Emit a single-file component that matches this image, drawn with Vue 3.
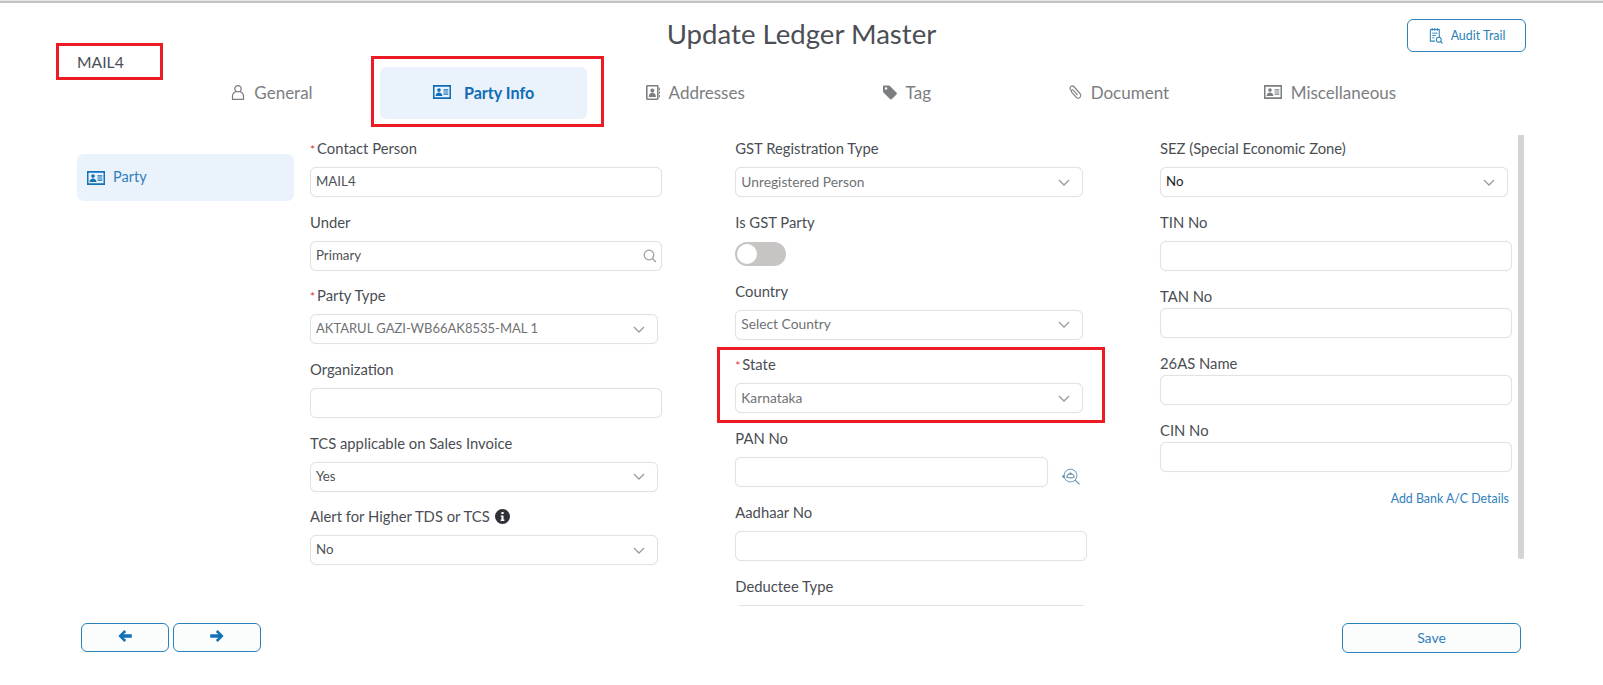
<template>
  <div class="page">
    <header class="top">
      <span></span>
      <h1 class="title">Update Ledger Master</h1>
      <div class="top-right">
        <button class="audit-btn">
          <svg class="audit-icon" viewBox="0 0 16 18">
            <path d="M2.5 2.5h9.5v8M2.5 2.5v12.5h5" fill="none" stroke="#2a82b8" stroke-width="1.1" />
            <path d="M4.5 1v3M7.2 1v3M10 1v3M4.5 6.5h5.5M4.5 9h4M4.5 11.500h2.500" fill="none" stroke="#2a82b8" stroke-width="1" />
            <circle cx="11.500" cy="13.500" r="2.600" fill="none" stroke="#2a82b8" stroke-width="1.100" />
            <path d="M13.400 15.400L15.500 17.500" stroke="#2a82b8" stroke-width="1.200" />
          </svg>
          Audit Trail
        </button>
      </div>
    </header>

    <nav class="tabs">
      <div
        v-for="tab in tabs"
        :key="tab.name"
        class="tab"
        :class="{ active: tab.active }"
      >
        <svg class="tab-icon" :class="tab.icon" :viewBox="icons[tab.icon].box">
          <path :d="icons[tab.icon].d" fill="currentColor" fill-rule="evenodd" />
        </svg>
        <span>{{ tab.name }}</span>
      </div>
    </nav>

    <main class="body">
      <aside class="side">
        <div class="side-item">
          <svg class="side-icon" :viewBox="icons.card.box">
            <path :d="icons.card.d" fill="currentColor" fill-rule="evenodd" />
          </svg>
          <span>Party</span>
        </div>
      </aside>

      <section class="form">
        <div
          v-for="(col, i) in columns"
          :key="i"
          class="col"
          :class="'col-' + i"
        >
          <div
            v-for="f in col"
            :key="f.label"
            class="field"
            :class="{ tight: f.tight, 'toggle-field': f.kind === 'toggle' }"
          >
            <label class="lbl">
              <i v-if="f.required" class="req">*</i>{{ f.label }}
              <svg v-if="f.info" class="info" viewBox="0 0 16 16">
                <path
                  d="M8 0a8 8 0 1 1 0 16A8 8 0 0 1 8 0zM6.800 3.200v2.200h2.400V3.200zM6 6.800v1.500h.9v3H6v1.500h4v-1.500H9.100V6.800z"
                  fill="#2f3136"
                  fill-rule="evenodd"
                />
              </svg>
            </label>

            <div v-if="f.kind === 'toggle'" class="toggle"><span class="knob"></span></div>

            <div v-else-if="f.kind === 'pan'" class="pan-row">
              <div class="ctl"></div>
              <svg class="pan-icon" viewBox="0 0 20 18">
                <circle cx="10" cy="8" r="6.800" fill="none" stroke="#5f93b3" stroke-width="1" />
                <path d="M14.900 12.800L19.500 17.400" stroke="#5f93b3" stroke-width="1.300" />
                <path d="M6 9.500c1.200-4.500 7-4.500 8 0-2 1.300-6 1.300-8 0z" fill="none" stroke="#6d8ea3" stroke-width="1.100" />
                <circle cx="10" cy="6" r="1.300" fill="#6d8ea3" />
                <path d="M0.500 9L3.500 6.800v4.400z" fill="#5f93b3" />
              </svg>
            </div>

            <div
              v-else
              class="ctl"
              :class="[f.kind, f.tone]"
            >
              <span>{{ f.value }}</span>
              <svg v-if="f.kind === 'select'" class="chev" viewBox="0 0 12 7">
                <path d="M1 1l5 5 5-5" fill="none" stroke="#9a9a9a" stroke-width="1.300" />
              </svg>
              <svg v-if="f.kind === 'search'" class="glass" viewBox="0 0 14 14">
                <circle cx="6" cy="6" r="4.800" fill="none" stroke="#9c9c9c" stroke-width="1.200" />
                <path d="M9.500 9.500L13 13" stroke="#9c9c9c" stroke-width="1.300" />
              </svg>
            </div>
          </div>

          <a v-if="i === 2" class="bank">Add Bank A/C Details</a>
        </div>
      </section>

      <div class="scroll"></div>
    </main>

    <footer class="foot">
      <div class="nav-btns">
        <button class="btn nav">
          <svg viewBox="0 0 14 12" class="arrow"><path d="M6.300 0L8.200 1.900 5.600 4.300H13.800v3.400H5.600L8.200 10.100 6.300 12 .4 6z" fill="#1172b8" /></svg>
        </button>
        <button class="btn nav">
          <svg viewBox="0 0 14 12" class="arrow"><path d="M7.700 0L5.800 1.900l2.600 2.400H.2v3.400h8.200l-2.600 2.400L7.700 12l5.900-6z" fill="#1172b8" /></svg>
        </button>
      </div>
      <button class="btn save">Save</button>
    </footer>

    <!-- red annotation boxes drawn over the screen -->
    <div class="mark mark-name">MAIL4</div>
    <div class="mark mark-tab"></div>
    <div class="mark mark-state"></div>
  </div>
</template>

<script setup>
const card =
  'M0 0h18v14H0zM1.500 1.700v10.600h15V1.700zM6 3.300a1.800 1.800 0 1 1 0 3.600 1.800 1.800 0 0 1 0-3.600zM2.600 11c0-4.700 6.800-4.700 6.800 0zM10.500 4.200h4.800v1.200h-4.800zM10.500 6.400h4.800v1.200h-4.800zM10.500 8.600h4.800v1.200h-4.800z'

const icons = {
  user: {
    box: '0 0 14 16',
    d: 'M7 0a4 4 0 0 1 3 6.700c2.200 1 3.500 2.800 3.500 5V16H.5v-4.300c0-2.200 1.300-4 3.500-5A4 4 0 0 1 7 0zM7 1.300a2.700 2.700 0 1 0 0 5.400 2.700 2.700 0 0 0 0-5.400zM5.300 7.500c-2 .7-3.500 2.200-3.500 4.200v3h10.400v-3c0-2-1.500-3.500-3.500-4.200-1 .6-2.400.6-3.400 0z'
  },
  card: { box: '0 0 18 14', d: card },
  book: {
    box: '0 0 15 16',
    d: 'M1.500 0h10.500A1.500 1.500 0 0 1 13.500 1.500v13a1.500 1.500 0 0 1-1.500 1.500H1.500A1.500 1.500 0 0 1 0 14.500v-13A1.500 1.500 0 0 1 1.500 0zM1.700 1.700v12.600h10.100V1.700zM6.800 3.600a2.200 2.200 0 1 1 0 4.400 2.200 2.200 0 0 1 0-4.400zM2.900 12.800c0-6 7.800-6 7.800 0zM14 3h1v2.500h-1zM14 6.800h1v2.500h-1zM14 10.600h1v2.500h-1z'
  },
  tag: {
    box: '0 0 15 15',
    d: 'M0 1.200C0 .5.500 0 1.200 0h5c.5 0 .9.200 1.200.5l7 7c.6.600.6 1.500 0 2.100l-4.800 4.900c-.6.600-1.500.6-2.100 0l-7-7C.2 7.100 0 6.700 0 6.200zM3.300 2a1.300 1.300 0 1 0 0 2.600 1.300 1.300 0 0 0 0-2.600z'
  },
  clip: {
    box: '0 0 14 16',
    d: 'M2 1.300c1.300-1.300 3.200-1.200 4.400 0l6.300 7.300c1.400 1.600 1.300 3.600 0 5-1.400 1.400-3.500 1.300-4.800-.1L3 8c-.8-.9-.7-2.100 0-2.800.8-.8 2-.7 2.800.2l4.300 5-.9.800-4.300-5c-.4-.4-.8-.4-1.100-.1-.3.300-.3.800.1 1.200l4.900 5.400c.9 1 2.300 1 3.100.2.900-.9.900-2.200 0-3.300L5.500 2.300C4.700 1.400 3.600 1.400 2.900 2.100 2.100 2.900 2.100 4 2.900 5L2 5.800C.800 4.400.800 2.500 2 1.300z'
  }
}

const tabs = [
  { name: 'General', icon: 'user' },
  { name: 'Party Info', icon: 'card', active: true },
  { name: 'Addresses', icon: 'book' },
  { name: 'Tag', icon: 'tag' },
  { name: 'Document', icon: 'clip' },
  { name: 'Miscellaneous', icon: 'card' }
]

const columns = [
  [
    { label: 'Contact Person', required: true, kind: 'input', value: 'MAIL4', tone: 'dark' },
    { label: 'Under', kind: 'search', value: 'Primary', tone: 'dark' },
    { label: 'Party Type', required: true, kind: 'select', value: 'AKTARUL GAZI-WB66AK8535-MAL 1', tone: 'caps' },
    { label: 'Organization', kind: 'input' },
    { label: 'TCS applicable on Sales Invoice', kind: 'select', value: 'Yes', tone: 'dark' },
    { label: 'Alert for Higher TDS or TCS', info: true, kind: 'select', value: 'No', tone: 'dark' }
  ],
  [
    { label: 'GST Registration Type', kind: 'select', value: 'Unregistered Person' },
    { label: 'Is GST Party', kind: 'toggle' },
    { label: 'Country', kind: 'select', value: 'Select Country' },
    { label: 'State', required: true, kind: 'select', value: 'Karnataka' },
    { label: 'PAN No', kind: 'pan' },
    { label: 'Aadhaar No', kind: 'input' },
    { label: 'Deductee Type', kind: 'input' }
  ],
  [
    { label: 'SEZ (Special Economic Zone)', kind: 'select', value: 'No', tone: 'black' },
    { label: 'TIN No', kind: 'input' },
    { label: 'TAN No', kind: 'input', tight: true },
    { label: '26AS Name', kind: 'input', tight: true },
    { label: 'CIN No', kind: 'input', tight: true }
  ]
]
</script>

<style>
html,
body {
  margin: 0;
  background: #fff;
}
</style>

<style scoped>
.page {
  position: relative;
  width: 1603px;
  height: 685px;
  box-sizing: border-box;
  overflow: hidden;
  background: #fff;
  border-top: 1px solid #e6e6e6;
  font-family: Lato, "Open Sans", sans-serif;
  color: #4a4e54;
}

.top {
  display: grid;
  grid-template-columns: 1fr auto 1fr;
  align-items: center;
  height: 33px;
  padding-top: 16px;
  border-top: 2px solid #c2c2c2;
}

.title {
  margin: 0 0 4px;
  font-size: 27.600px;
  font-weight: 400;
  line-height: 26px;
  color: #4b4f55;
}

.top-right {
  display: flex;
  justify-content: flex-end;
  padding-right: 77px;
}

.audit-btn {
  display: flex;
  align-items: center;
  justify-content: center;
  gap: 8px;
  width: 119px;
  height: 33px;
  padding: 0;
  background: #fff;
  border: 1px solid #2a82b8;
  border-radius: 6px;
  font: 12.400px Lato, sans-serif;
  color: #2a82b8;
}

.audit-icon {
  width: 15px;
  height: 17px;
}

.tabs {
  display: flex;
  gap: 4.600px;
  margin-top: 15px;
  padding-left: 168.500px;
}

.tab {
  display: flex;
  align-items: center;
  justify-content: center;
  gap: 9px;
  box-sizing: border-box;
  width: 207px;
  height: 52px;
  padding-bottom: 2px;
  border-radius: 6px;
  font-size: 17px;
  color: #7b7e82;
}

.tab.active {
  gap: 13px;
  background: #eaf2fc;
  color: #0f6cb5;
  font-size: 16.100px;
  font-weight: 700;
}

.tab-icon {
  height: 15px;
  width: 14px;
}

.tab-icon.card {
  width: 18px;
  height: 14px;
}

.body {
  display: flex;
  height: 471px;
  margin-top: 16px;
  padding-left: 77px;
  overflow: hidden;
}

.side {
  flex: none;
  width: 217px;
  margin-right: 16px;
  padding-top: 19px;
}

.side-item {
  display: flex;
  align-items: center;
  gap: 8px;
  height: 47px;
  padding-left: 10px;
  background: #eaf2fc;
  border-radius: 7px;
  font-size: 14.500px;
  color: #2f80bd;
}

.side-item span {
  margin-bottom: 2px;
}

.side-icon {
  width: 18px;
  height: 14px;
  color: #1172b8;
}

.form {
  display: grid;
  grid-template-columns: 352px 351.500px 352px;
  column-gap: 73.250px;
  flex: none;
  padding-top: 5px;
}

.field {
  margin-bottom: 17px;
}

.col-0 .field {
  margin-bottom: 16.700px;
}

.col-1 .field {
  margin-bottom: 16.800px;
}

.lbl {
  display: block;
  height: 18px;
  margin-bottom: 9px;
  font-size: 14.800px;
  line-height: 17px;
  color: #4a4e54;
}

.tight .lbl {
  margin-bottom: 2px;
}

.req {
  margin-right: 2px;
  font-size: 12px;
  font-style: normal;
  color: #d8333a;
}

.info {
  width: 15px;
  height: 15px;
  margin-left: 2px;
  vertical-align: -2px;
}

.ctl {
  display: flex;
  align-items: center;
  justify-content: space-between;
  box-sizing: border-box;
  height: 30px;
  padding: 0 5px 2px;
  background: #fff;
  border: 1px solid #e2e2e2;
  border-radius: 6px;
  box-shadow: 0 0 1px #e8e8e8;
  font-size: 13.800px;
  color: #6f7275;
}

.ctl.dark {
  font-size: 13.300px;
  color: #4f5256;
}

.ctl.caps {
  font-size: 13px;
}

.ctl.black {
  font-size: 13.300px;
  color: #1c1c1c;
}

.ctl.select {
  width: 348px;
  padding-right: 12px;
}

.ctl.search {
  padding-right: 4px;
}

.chev {
  width: 12px;
  height: 7px;
  margin-top: 2px;
}

.glass {
  width: 14px;
  height: 14px;
  margin-top: 2px;
}

.toggle-field .lbl {
  margin-bottom: 10px;
}

.toggle {
  display: flex;
  align-items: center;
  box-sizing: border-box;
  width: 51px;
  height: 24px;
  padding-left: 2px;
  background: #c9c4c4;
  border-radius: 12px;
}

.knob {
  width: 20px;
  height: 20px;
  background: #fff;
  border-radius: 50%;
}

.pan-row {
  display: flex;
  align-items: center;
}

.pan-row .ctl {
  width: 313px;
}

.pan-icon {
  width: 19px;
  height: 17px;
  margin: 8px 0 0 13px;
}

.bank {
  display: block;
  margin-top: 18px;
  padding-right: 3px;
  font-size: 12.400px;
  line-height: 18px;
  text-align: right;
  color: #2f80bd;
}

.scroll {
  flex: none;
  width: 6px;
  height: 424px;
  margin-left: 6px;
  background: #d4d4d4;
  border-radius: 0 0 2px 2px;
}

.foot {
  display: flex;
  justify-content: space-between;
  margin-top: 17px;
  padding: 0 82px 0 81px;
}

.nav-btns {
  display: flex;
  gap: 4px;
}

.btn {
  display: flex;
  align-items: center;
  justify-content: center;
  padding: 0;
  background: #fbfcfc;
  border: 1px solid #2a82b8;
  border-radius: 6px;
}

.nav {
  width: 88px;
  height: 29px;
  padding-bottom: 4px;
}

.arrow {
  width: 14px;
  height: 12px;
}

.save {
  width: 179px;
  height: 30px;
  padding-bottom: 2px;
  font: 14px Lato, sans-serif;
  color: #2f80bd;
}

.mark {
  position: absolute;
  box-sizing: border-box;
  border: 3px solid #ed1c24;
}

.mark-name {
  left: 56px;
  top: 42px;
  display: flex;
  align-items: center;
  width: 107px;
  height: 37px;
  padding-left: 18px;
  font-size: 15.700px;
  color: #4a4e54;
}

.mark-tab {
  left: 371px;
  top: 55px;
  width: 233px;
  height: 71px;
}

.mark-state {
  left: 717px;
  top: 346px;
  width: 388px;
  height: 76px;
}
</style>
